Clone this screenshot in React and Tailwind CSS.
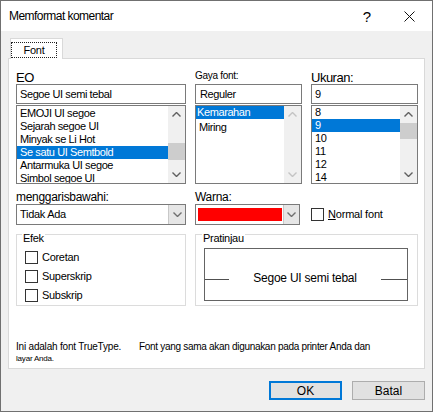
import React from 'react';

const Chev = ({ dir = 'down', color = '#606060' }) => (
  <svg width="9" height="5" viewBox="0 0 9 5">
    <path
      d={dir === 'down' ? 'M0.5 0.5 L4.5 4.5 L8.5 0.5' : 'M0.5 4.5 L4.5 0.5 L8.5 4.5'}
      fill="none"
      stroke={color}
      strokeWidth="1.4"
    />
  </svg>
);

const ScrollBar = ({ thumb, disabled }) => (
  <div className="w-[17px] bg-[#f0f0f0] flex flex-col shrink-0">
    <div className="h-[17px] flex items-center justify-center">
      <Chev dir="up" color={disabled ? '#c4c4c4' : '#606060'} />
    </div>
    <div className="flex-1 flex flex-col">
      {!disabled && <div className={`bg-[#cdcdcd] ${thumb}`} />}
    </div>
    <div className="h-[17px] flex items-center justify-center">
      <Chev dir="down" color={disabled ? '#c4c4c4' : '#606060'} />
    </div>
  </div>
);

const ListBox = ({ items, selected, pad, itemPad, thumb, disabled }) => (
  <div className="mt-[1px] h-[79px] border border-[#7a7a7a] bg-white flex overflow-hidden">
    <div className={`flex-1 overflow-hidden ${pad}`}>
      {items.map((it, i) => (
        <div
          key={it}
          className={`h-[13px] leading-[13px] text-[11px] tracking-[-0.4px] whitespace-nowrap ${itemPad} ${
            i === selected ? 'bg-[#0078d7] text-white' : 'text-black'
          }`}
        >
          {it}
        </div>
      ))}
    </div>
    <ScrollBar thumb={thumb} disabled={disabled} />
  </div>
);

const TextBox = ({ value, pl }) => (
  <div className={`h-[20px] border border-[#7a7a7a] bg-white flex items-center text-[11px] tracking-[-0.4px] ${pl}`}>
    {value}
  </div>
);

const Check = ({ label }) => (
  <div className="h-[19px] flex items-center gap-[4px]">
    <div className="w-[13px] h-[13px] border border-[#333333] bg-white" />
    <span className="text-[11px] tracking-[-0.3px]">{label}</span>
  </div>
);

export default function App() {
  return (
    <div className="w-[433px] h-[412px] border border-[#707070] bg-[#f0f0f0] flex flex-col overflow-hidden text-black font-['Liberation_Sans',Arial,sans-serif]">
      {/* title bar */}
      <div className="h-[30px] shrink-0 bg-white flex items-center pl-[8px]">
        <span className="text-[12px] tracking-[-0.55px]">Memformat komentar</span>
        <span className="ml-auto mr-[33px] text-[15px] leading-none">?</span>
        <svg className="mr-[17px]" width="11" height="11" viewBox="0 0 11 11">
          <path d="M0.5 0.5 L10.5 10.5 M10.5 0.5 L0.5 10.5" stroke="#111" strokeWidth="1" />
        </svg>
      </div>

      <div className="flex-1 px-[7px] pt-[7px]">
        {/* tab */}
        <div className="relative z-10 -mb-px ml-[2px] w-[53px] h-[21px] border-l border-t border-r border-[#d9d9d9] bg-white">
          <div className="mt-[3px] w-[46px] h-[16px] border border-dotted border-[#222] flex items-center justify-center text-[11px] tracking-[-0.2px]">
            Font
          </div>
        </div>

        {/* panel */}
        <div className="h-[311px] border border-[#d9d9d9] bg-white pt-[12px] pl-[7px]">
          <div className="grid grid-cols-[170px_107px_107px] gap-x-[9px]">
            <div className="flex flex-col">
              <div className="h-[13px] leading-[13px] text-[13px] tracking-[-0.5px]">EO</div>
              <TextBox value="Segoe UI semi tebal" pl="pl-[3px]" />
              <ListBox
                items={['EMOJI UI segoe', 'Sejarah segoe UI', 'Minyak se Li Hot', 'Se satu UI Semtbold', 'Antarmuka UI segoe', 'Simbol segoe UI']}
                selected={3}
                pad="pt-[1px]"
                itemPad="pl-[3px]"
                thumb="mt-[20px] h-[17px]"
              />
            </div>
            <div className="flex flex-col">
              <div className="h-[13px] leading-[10px] text-[10px] tracking-[-0.3px]">Gaya font:</div>
              <TextBox value="Reguler" pl="pl-[4px]" />
              <div className="mt-[1px] h-[79px] border border-[#7a7a7a] bg-white flex overflow-hidden">
                <div className="flex-1 overflow-hidden">
                  <div className="h-[13px] leading-[13px] text-[11px] tracking-[-0.4px] pl-[1px] bg-[#0078d7] text-white">
                    Kemarahan
                  </div>
                  <div className="mt-[2px] h-[13px] leading-[13px] text-[11px] tracking-[-0.4px] pl-[3px]">Miring</div>
                </div>
                <ScrollBar disabled />
              </div>
            </div>
            <div className="flex flex-col">
              <div className="h-[13px] leading-[13px] text-[13px] tracking-[-0.5px]">Ukuran:</div>
              <TextBox value="9" pl="pl-[3px]" />
              <ListBox
                items={['8', '9', '10', '11', '12', '14']}
                selected={1}
                pad="pt-0"
                itemPad="pl-[3px]"
                thumb="mt-0 h-[16px]"
              />
            </div>

            {/* row 2 */}
            <div className="flex flex-col">
              <div className="h-[20px] flex items-end">
                <span className="leading-[13px] text-[12px] tracking-[-0.3px]">menggarisbawahi:</span>
              </div>
              <div className="h-[21px] border border-[#7a7a7a] bg-white flex">
                <div className="flex-1 flex items-center pl-[3px] text-[11px] tracking-[-0.3px]">Tidak Ada</div>
                <div className="w-[17px] bg-[#e6e6e6] border-l border-[#c8c8c8] flex items-center justify-center">
                  <Chev color="#707070" />
                </div>
              </div>
            </div>
            <div className="flex flex-col">
              <div className="h-[20px] flex items-end">
                <span className="leading-[13px] text-[12px] tracking-[-0.3px]">Warna:</span>
              </div>
              <div className="w-[105px] h-[21px] border border-[#7a7a7a] bg-white flex">
                <div className="flex-1 pl-[2px] pr-[1px] pt-[3px] pb-[3px]">
                  <div className="h-full bg-[#ff0000]" />
                </div>
                <div className="w-[16px] bg-[#e6e6e6] border-l border-[#c8c8c8] flex items-center justify-center">
                  <Chev color="#707070" />
                </div>
              </div>
            </div>
            <div className="flex flex-col">
              <div className="h-[20px]" />
              <div className="h-[21px] flex items-center gap-[4px]">
                <div className="w-[13px] h-[13px] border border-[#333333] bg-white" />
                <span className="text-[11px] tracking-[-0.2px] font-medium">
                  <span className="underline">N</span>ormal font
                </span>
              </div>
            </div>

            {/* row 3 */}
            <div className="relative mt-[9px] h-[72px] border border-[#dcdcdc] pt-[13px] pl-[8px]">
              <span className="absolute left-[5px] -top-[3px] bg-white px-[1px] text-[11px] leading-[12px] tracking-[-0.3px]">
                Efek
              </span>
              <Check label="Coretan" />
              <Check label="Superskrip" />
              <Check label="Subskrip" />
            </div>
            <div className="relative col-span-2 mt-[9px] h-[72px] border border-[#dcdcdc] pt-[13px] pl-[8px] pr-[9px]">
              <span className="absolute left-[6px] -top-[3px] bg-white px-[1px] text-[11px] leading-[12px] tracking-[-0.3px]">
                Pratinjau
              </span>
              <div className="h-[53px] border border-[#646464] flex items-center pt-[6px]">
                <div className="w-[24px] h-px bg-[#505050] mt-[4px]" />
                <div className="flex-1 text-center text-[12px] tracking-[-0.25px]">Segoe UI semi tebal</div>
                <div className="w-[26px] h-px bg-[#505050] mt-[4px]" />
              </div>
            </div>
          </div>

          {/* info text */}
          <div className="mt-[35px] flex items-center h-[12px]">
            <span className="w-[123px] text-[10px] leading-[12px] tracking-[-0.2px]">Ini adalah font TrueType.</span>
            <span className="text-[10px] leading-[12px] tracking-[-0.3px]">
              Font yang sama akan digunakan pada printer Anda dan
            </span>
          </div>
          <div className="mt-[1px] text-[8px] leading-[10px] tracking-[-0.2px]">layar Anda.</div>
        </div>

        {/* buttons */}
        <div className="mt-[12px] flex justify-end gap-[10px]">
          <button className="w-[73px] h-[19px] border-2 border-[#0078d7] bg-[#e1e1e1] text-[12px] leading-none flex items-center justify-center">
            OK
          </button>
          <button className="w-[73px] h-[19px] border border-[#adadad] bg-[#e1e1e1] text-[12px] leading-none flex items-center justify-center">
            Batal
          </button>
        </div>
      </div>
    </div>
  );
}
